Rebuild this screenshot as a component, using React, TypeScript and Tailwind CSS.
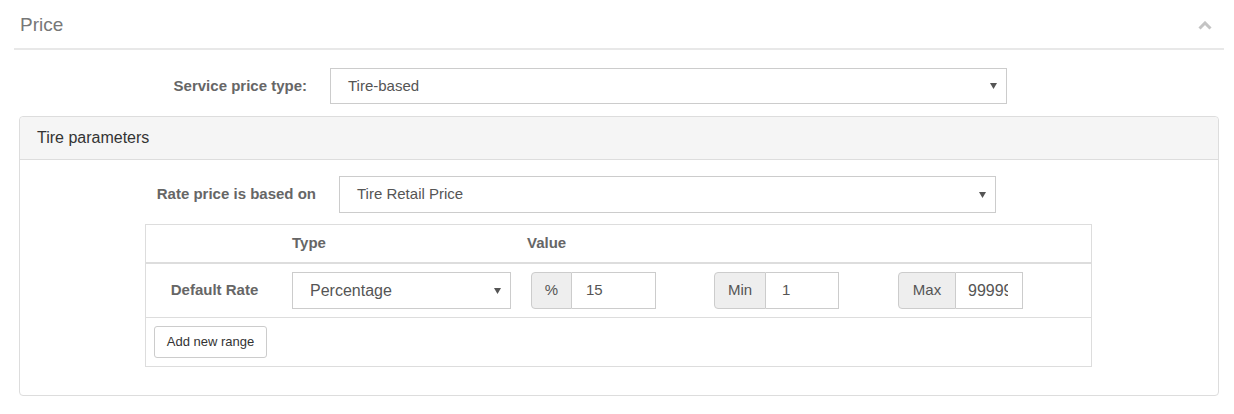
import React from "react";

const Arrow = () => (
  <svg width="7" height="6" viewBox="0 0 7 6" className="shrink-0">
    <path d="M0 0 L7 0 L3.5 6 Z" fill="#555" />
  </svg>
);

function Select({ text, w, h, pl, pr, size }: { text: string; w: string; h: string; pl: string; pr: string; size: string }) {
  return (
    <div className={`flex items-center justify-between border border-[#ccc] bg-white text-[#555] ${w} ${h} ${pl} ${pr} ${size}`}>
      <span>{text}</span>
      <Arrow />
    </div>
  );
}

function AddonInput({ label, value, aw, iw, ipl, vw, vsize }: { label: string; value: string; aw: string; iw: string; ipl: string; vw: string; vsize: string }) {
  return (
    <div className="flex h-[37px] text-[15px]">
      <div className={`flex items-center justify-center rounded-l-[4px] border border-[#ccc] bg-[#eee] text-[#555] ${aw}`}>{label}</div>
      <div className={`flex items-center border border-l-0 border-[#ccc] bg-white text-[#555] ${iw} ${ipl}`}>
        <div className={`overflow-hidden whitespace-nowrap ${vw} ${vsize}`}>{value}</div>
      </div>
    </div>
  );
}

export default function App() {
  return (
    <div className="h-[414px] w-[1234px] bg-white font-['Liberation_Sans',Arial,sans-serif]">
      <div className="pl-[14px] pr-[10px]">
        <div className="flex h-[50px] items-center justify-between border-b-2 border-[#e8e8e8] pl-[6px] pr-[12px] pt-[2px]">
          <span className="text-[19px] text-[#777]">Price</span>
          <svg width="14" height="9" viewBox="0 0 14 9">
            <path d="M1.5 7.5 L7 2 L12.5 7.5" fill="none" stroke="#c4c4c4" strokeWidth="3" />
          </svg>
        </div>

        <div className="mt-[18px] flex items-center">
          <div className="w-[316px] pr-[23px] text-right text-[15px] font-bold text-[#666]">Service price type:</div>
          <Select text="Tire-based" w="w-[677px]" h="h-[36px]" pl="pl-[17px]" pr="pr-[9px]" size="text-[15px]" />
        </div>

        <div className="mx-[5px] mt-[12px] rounded-[4px] border border-[#ddd] pb-[28px]">
          <div className="flex h-[43px] items-center rounded-t-[4px] border-b border-[#ddd] bg-[#f5f5f5] pl-[17px] text-[16px] text-[#333]">
            Tire parameters
          </div>
          <div>
            <div className="mt-[16px] flex items-center">
              <div className="w-[319px] pr-[23px] text-right text-[15px] font-bold text-[#666]">Rate price is based on</div>
              <Select text="Tire Retail Price" w="w-[657px]" h="h-[37px]" pl="pl-[17px]" pr="pr-[9px]" size="text-[15px]" />
            </div>

            <div className="ml-[125px] mt-[11px] w-[947px] border border-[#ddd]">
              <div className="flex h-[39px] items-center border-b-2 border-[#ddd] text-[15px] font-bold text-[#666]">
                <div className="w-[137px]" />
                <div className="w-[236px] pl-[9px]">Type</div>
                <div className="pl-[8px]">Value</div>
              </div>
              <div className="flex h-[54px] items-center border-b border-[#ddd]">
                <div className="w-[137px] text-center text-[15px] font-bold text-[#666]">Default Rate</div>
                <div className="w-[236px] pl-[9px]">
                  <Select text="Percentage" w="w-[219px]" h="h-[37px]" pl="pl-[17px]" pr="pr-[9px]" size="text-[16px]" />
                </div>
                <div className="pl-[12px]">
                  <AddonInput label="%" value="15" aw="w-[41px]" iw="w-[84px]" ipl="pl-[14px]" vw="w-[60px]" vsize="text-[15px]" />
                </div>
                <div className="pl-[58px]">
                  <AddonInput label="Min" value="1" aw="w-[52px]" iw="w-[73px]" ipl="pl-[16px]" vw="w-[50px]" vsize="text-[15px]" />
                </div>
                <div className="pl-[59px]">
                  <AddonInput label="Max" value="99999" aw="w-[58px]" iw="w-[67px]" ipl="pl-[12px]" vw="w-[40px]" vsize="text-[16px]" />
                </div>
              </div>
              <div className="flex h-[48px] items-center pl-[8px]">
                <div className="flex h-[32px] w-[113px] items-center justify-center rounded-[3px] border border-[#ccc] bg-white text-[13px] text-[#333]">
                  Add new range
                </div>
              </div>
            </div>
          </div>
        </div>
      </div>
    </div>
  );
}
